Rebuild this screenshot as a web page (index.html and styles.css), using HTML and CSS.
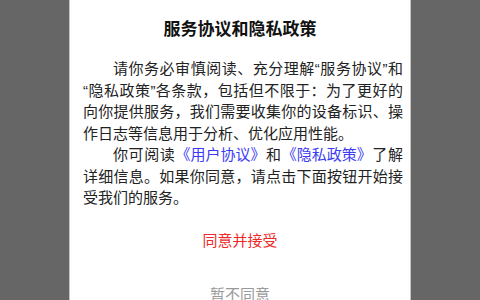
FILE: index.html
```html
<!DOCTYPE html>
<html lang="zh-CN">
  <head>
    <meta charset="utf-8">
    <title>服务协议和隐私政策</title>
    <link rel="stylesheet" href="styles.css">
  </head>
  <body>
    <div class="dialog">
      <h2 class="dialog-title">服务协议和隐私政策</h2>
      <div class="dialog-content">
        <p>请你务必审慎阅读、充分理解“服务协议”和“隐私政策”各条款，包括但不限于：为了更好的向你提供服务，我们需要收集你的设备标识、操作日志等信息用于分析、优化应用性能。</p>
        <p>你可阅读<a href="#">《用户协议》</a>和<a href="#">《隐私政策》</a>了解详细信息。如果你同意，请点击下面按钮开始接受我们的服务。</p>
      </div>
      <div class="dialog-actions">
        <button class="btn btn-agree">同意并接受</button>
        <button class="btn btn-cancel">暂不同意</button>
      </div>
    </div>
  </body>
</html>
```

FILE: styles.css
```css
html,
body {
  margin: 0;
  padding: 0;
  height: 300px;
  overflow: hidden;
}

body {
  background: #666666;
  font-family: "Liberation Sans", "Noto Sans CJK SC", sans-serif;
  color: #222222;
}

/* Dialog card */
.dialog {
  box-sizing: border-box;
  width: 342px;
  min-height: 320px;
  margin: 0 auto;
  background: #ffffff;
  border-left: 1px solid #c4c4c4;
  border-right: 1px solid #c4c4c4;
}

.dialog-title {
  margin: 0;
  padding-top: 19px;
  font-size: 17px;
  line-height: 21px;
  font-weight: bold;
  text-align: center;
  color: #111111;
}

.dialog-content {
  padding: 18px 7px 0 13px;
}

.dialog-content p {
  margin: 0;
  font-size: 15px;
  line-height: 21.5px;
  text-indent: 2em;
  text-align: justify;
}

.dialog-content a {
  display: inline-block;
  text-indent: 0;
  color: #3b3bf5;
  text-decoration: none;
}

/* Buttons */
.dialog-actions {
  display: flex;
  flex-direction: column;
  align-items: center;
  gap: 32px;
  padding-top: 21px;
}

.btn {
  margin: 0;
  padding: 0;
  border: 0;
  background: none;
  font-family: inherit;
  font-size: 15px;
  line-height: 22px;
  cursor: pointer;
}

.btn-agree {
  color: #ec2a2a;
}

.btn-cancel {
  color: #9a9a9a;
}
```
